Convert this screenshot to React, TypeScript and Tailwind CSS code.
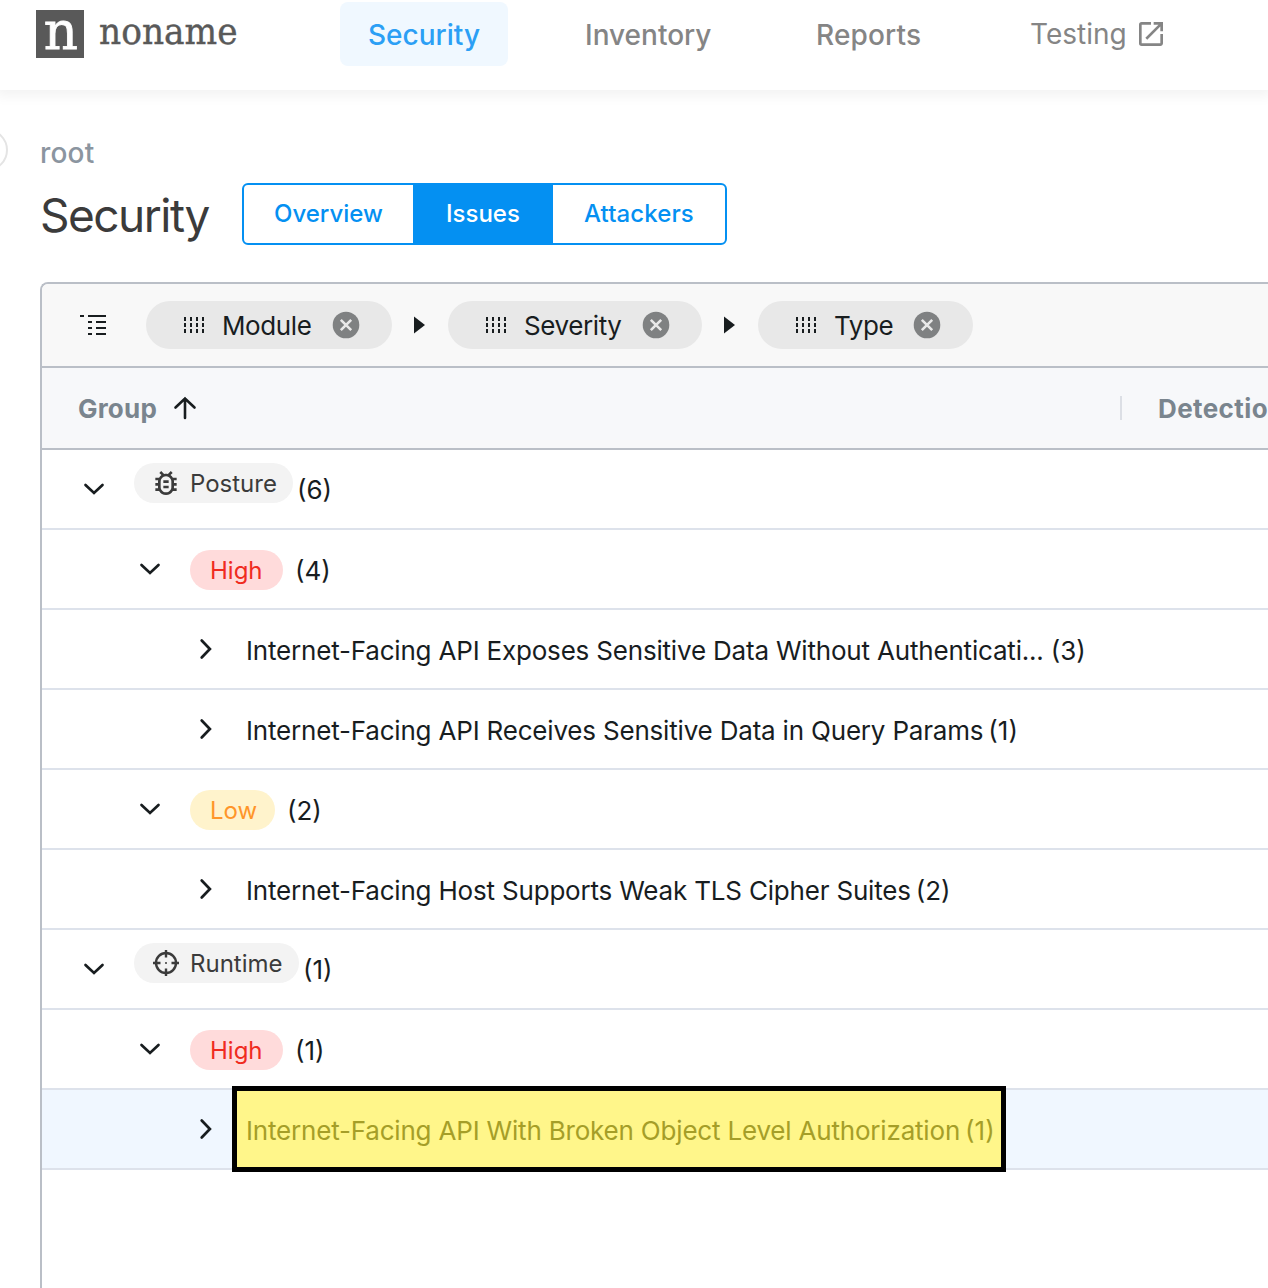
import { MdOutlineBugReport, MdOpenInNew } from "react-icons/md";

function Chevron({ open }: { open: boolean }) {
  return (
    <svg width="32" height="32" viewBox="0 0 32 32" fill="none" stroke="#181d1f" strokeWidth="2.7" strokeLinecap="round" strokeLinejoin="miter" className="shrink-0">
      {open ? <path d="M7.5 12 L16 20 L24.5 12" /> : <path d="M11.7 7.5 L19.9 16 L11.7 24.5" />}
    </svg>
  );
}

function Crosshair() {
  return (
    <svg width="28" height="28" viewBox="0 0 28 28" fill="none" stroke="#3b3b3b" strokeWidth="2.4" className="ml-0.5 mr-0.5">
      <circle cx="14" cy="14" r="10" />
      <path d="M14 1v7.5M14 19.5v7.5M1 14h7.5M19.5 14h7.5" />
      <circle cx="14" cy="14" r="1" fill="#3b3b3b" stroke="none" />
    </svg>
  );
}

function Grip() {
  return (
    <svg width="24" height="18" viewBox="0 0 24 18" fill="#181d1f" shapeRendering="crispEdges">
      {[0, 6, 12, 18].map((x) =>
        [0, 6, 12].map((y) => <rect key={`${x}-${y}`} x={x + 2} y={y + 1} width="2" height="4" />),
      )}
    </svg>
  );
}

function Close() {
  return (
    <svg width="28" height="28" viewBox="0 0 28 28">
      <circle cx="14" cy="14" r="13.3" fill="#7f8182" />
      <path d="M8.8 8.8 19.2 19.2M19.2 8.8 8.8 19.2" stroke="#e8e8e8" strokeWidth="2.6" />
    </svg>
  );
}

function Chip({ label, width, text }: { label: string; width: string; text: string }) {
  return (
    <div className={`flex h-12 shrink-0 items-center rounded-full bg-[#e8e8e8] pl-9 ${width}`}>
      <Grip />
      <span className={`ml-4 pt-0.5 text-[26px] leading-8 tracking-[-0.4px] ${text}`}>{label}</span>
      <Close />
    </div>
  );
}

function Arrow() {
  return (
    <svg width="11" height="18" viewBox="0 0 11 18" className="ml-[22px] mr-[23px] shrink-0">
      <path d="M0 0.5 11 9 0 17.5Z" fill="#181d1f" />
    </svg>
  );
}

type Row = {
  level: 0 | 1 | 2;
  open: boolean;
  kind: "module" | "high" | "low" | "text";
  label: string;
  count: number;
  selected?: boolean;
};

const rows: Row[] = [
  { level: 0, open: true, kind: "module", label: "Posture", count: 6 },
  { level: 1, open: true, kind: "high", label: "High", count: 4 },
  { level: 2, open: false, kind: "text", label: "Internet-Facing API Exposes Sensitive Data Without Authenticati...", count: 3 },
  { level: 2, open: false, kind: "text", label: "Internet-Facing API Receives Sensitive Data in Query Params", count: 1 },
  { level: 1, open: true, kind: "low", label: "Low", count: 2 },
  { level: 2, open: false, kind: "text", label: "Internet-Facing Host Supports Weak TLS Cipher Suites", count: 2 },
  { level: 0, open: true, kind: "module", label: "Runtime", count: 1 },
  { level: 1, open: true, kind: "high", label: "High", count: 1 },
  { level: 2, open: false, kind: "text", label: "Internet-Facing API With Broken Object Level Authorization", count: 1, selected: true },
];

const indent = { 0: "pl-9", 1: "pl-[92px]", 2: "pl-[148px]" };

function GroupRow({ row }: { row: Row }) {
  const posture = row.label === "Posture";
  const truncated = row.label.endsWith("...");
  return (
    <div className={`relative flex h-20 shrink-0 items-center border-b-2 border-[#dde2eb] ${indent[row.level]} ${row.selected ? "bg-[#f0f7ff]" : ""}`}>
      {row.selected && <div className="absolute -top-1 left-[190px] h-[86px] w-[774px] border-[5px] border-black bg-[#fff68a]" />}
      <Chevron open={row.open} />
      {row.kind === "module" && (
        <>
          <div className={`mb-3 ml-6 flex h-10 shrink-0 items-center rounded-full bg-[#f3f3f3] pl-4 ${posture ? "w-[159px]" : "w-[165px]"}`}>
            {posture ? <MdOutlineBugReport size={32} color="#3b3b3b" /> : <Crosshair />}
            <span className="ml-2 pt-0.5 text-[24px] leading-8 text-[#3b3b3b]">{row.label}</span>
          </div>
          <span className="ml-1 pt-0.5 text-[26px] leading-8">({row.count})</span>
        </>
      )}
      {(row.kind === "high" || row.kind === "low") && (
        <>
          <div className={`ml-6 mt-0.5 flex h-10 shrink-0 items-center rounded-full pl-5 ${row.kind === "high" ? "w-[93px] bg-[#ffdbdb] text-[#f02b20]" : "w-[85px] bg-[#fff3cc] text-[#ff9529]"}`}>
            <span className="pt-0.5 text-[24px] leading-8">{row.label}</span>
          </div>
          <span className="ml-3 pt-[3px] text-[26px] leading-8">({row.count})</span>
        </>
      )}
      {row.kind === "text" && (
        <div className={`relative ml-6 flex whitespace-nowrap pt-[3px] text-[26px] leading-8 ${truncated ? "gap-[7px]" : "gap-[5px]"} ${row.selected ? "text-[#a59e28]" : ""}`}>
          <span className="tracking-[-0.19px]">{row.label}</span>
          <span>({row.count})</span>
        </div>
      )}
    </div>
  );
}

export default function App() {
  return (
    <div className="flex h-[1288px] w-[1268px] flex-col overflow-hidden bg-white font-['Inter',sans-serif] text-[#181d1f]">
      <header className="relative flex h-[90px] shrink-0 items-start bg-white shadow-[0_2px_12px_4px_rgba(0,0,0,0.05)]">
        <div className="ml-9 mt-2.5 flex h-12 w-12 items-center justify-center bg-[#595959] font-['DejaVu_Serif',serif] text-[52px] leading-12 text-white">
          <span className="mb-[7px] ml-0.5 scale-x-102 [-webkit-text-stroke:0.8px_white]">n</span>
        </div>
        <span className="ml-[15px] mt-[9px] w-[241px] origin-left scale-x-93 font-['DejaVu_Serif',serif] text-[37px] leading-[46px] text-[#595959] [-webkit-text-stroke:0.4px_#595959]">noname</span>
        <nav className="mt-0.5 flex h-16 text-[28px] font-medium leading-[66px] text-[#858585]">
          <a className="h-16 w-[168px] rounded-lg bg-[#f0f8ff] pl-7 text-[#2b9ff5]">Security</a>
          <a className="ml-[77px] w-[127px] whitespace-nowrap">Inventory</a>
          <a className="ml-[104px] w-[106px] tracking-[0.15px]">Reports</a>
          <a className="ml-[108px] flex items-center font-normal">Testing<MdOpenInNew size={32} className="ml-2" /></a>
        </nav>
      </header>
      <main className="relative flex flex-1 flex-col pl-10">
        <div className="absolute -left-[34px] top-[39px] h-[42px] w-[42px] rounded-full border-2 border-[#e4e4e4]" />
        <div className="mt-[45px] text-[28px] font-medium leading-9 tracking-[0.2px] text-[#8b95a0]">root</div>
        <div className="mt-3 flex h-[62px] shrink-0 items-center">
          <h1 className="w-[202px] pt-0.5 text-[46px] leading-[62px] tracking-[-1.5px] text-[#3b3b3b]">Security</h1>
          <div className="flex h-[62px] overflow-hidden rounded-md border-2 border-[#0490f2] text-[24px] font-medium leading-[58px] text-[#0490f2]">
            <span className="w-[169px] pl-[30px]">Overview</span>
            <span className="w-[140px] bg-[#0490f2] pl-[33px] text-white">Issues</span>
            <span className="w-[172px] pl-[31px] tracking-[0.1px]">Attackers</span>
          </div>
        </div>
        <section className="mt-[37px] flex flex-1 flex-col overflow-hidden rounded-tl-lg border-l-2 border-t-2 border-[#babfc7]">
          <div className="flex h-[84px] shrink-0 items-center border-b-2 border-[#babfc7] bg-[#f8f8f8] pl-[38px]">
            <svg width="28" height="22" viewBox="0 0 28 22" fill="#181d1f" shapeRendering="crispEdges" className="mr-[38px] shrink-0">
              <path d="M0 1h4v2h-4zM8 1h18v2h-18zM8 7h4v2h-4zM16 7h10v2h-10zM8 13h4v2h-4zM16 13h10v2h-10zM8 19h4v2h-4zM16 19h10v2h-10z" />
            </svg>
            <Chip label="Module" width="w-[246px]" text="w-[110px]" />
            <Arrow />
            <Chip label="Severity" width="w-[254px]" text="w-[118px]" />
            <Arrow />
            <Chip label="Type" width="w-[215px]" text="w-[79px]" />
          </div>
          <div className="flex h-[82px] shrink-0 items-center border-b-2 border-[#babfc7] bg-[#f7f8fa] pl-9 text-[26px] font-bold tracking-[0.2px] text-[#7a858e]">
            <span>Group</span>
            <svg width="24" height="24" viewBox="0 0 24 24" fill="none" stroke="#181d1f" strokeWidth="2.6" strokeLinecap="round" className="ml-4">
              <path d="M12 22V2.5M2.5 11.5 12 2.5 21.5 11.5" />
            </svg>
            <div className="ml-auto flex w-[148px] items-center">
              <div className="h-6 w-0.5 shrink-0 bg-[#dcdfe5]" />
              <span className="ml-9 whitespace-nowrap tracking-[0.4px]">Detectio</span>
            </div>
          </div>
          {rows.map((row, i) => <GroupRow key={i} row={row} />)}
        </section>
      </main>
    </div>
  );
}
